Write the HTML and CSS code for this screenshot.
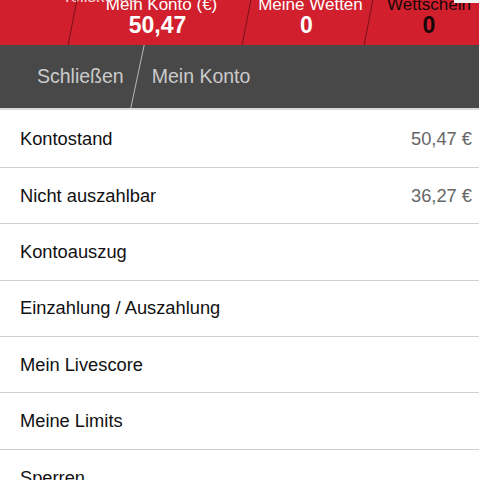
FILE: index.html
```html
<!DOCTYPE html>
<html>
<head>
<title>Mein Konto</title>
<link rel="stylesheet" href="styles.css">
</head>
<body>

<div class="topbar">
  <span class="ghost">Teilskonto</span>
  <span class="corner"></span>
  <div class="tab tab-first"></div>
  <div class="slash"></div>
  <div class="tab tab-konto">
    <span class="tab-label">Mein Konto (€)</span>
    <span class="tab-value">50,47</span>
  </div>
  <div class="slash"></div>
  <div class="tab tab-wetten">
    <span class="tab-label">Meine Wetten</span>
    <span class="tab-value">0</span>
  </div>
  <div class="slash"></div>
  <div class="tab tab-schein">
    <span class="tab-label">Wettschein</span>
    <span class="tab-value">0</span>
  </div>
</div>

<div class="crumbs">
  <span class="crumb crumb-back">Schließen</span>
  <div class="crumb-slash"></div>
  <span class="crumb">Mein Konto</span>
</div>

<ul class="menu">
  <li class="row"><span>Kontostand</span><span class="amount">50,47 €</span></li>
  <li class="row"><span>Nicht auszahlbar</span><span class="amount">36,27 €</span></li>
  <li class="row"><span>Kontoauszug</span></li>
  <li class="row"><span>Einzahlung / Auszahlung</span></li>
  <li class="row"><span>Mein Livescore</span></li>
  <li class="row"><span>Meine Limits</span></li>
  <li class="row"><span>Sperren</span></li>
</ul>

</body>
</html>
```

FILE: styles.css
```css
body
{
	margin: 0;
	font-family: "Liberation Sans", Arial, Helvetica, sans-serif;
	background: #ffffff;
	overflow: hidden;
}

/* red account strip */
.topbar
{
	position: relative;
	display: flex;
	height: 45px;
	background: #d11f2d;
	overflow: hidden;
	color: #ffffff;
}
.ghost
{
	position: absolute;
	left: 62px;
	top: -13px;
	font-size: 17px;
	color: #f4d4d6;
}
.corner
{
	position: absolute;
	right: 0;
	top: 0;
	width: 25px;
	height: 3px;
	background: #f2f2f2;
}
.tab
{
	display: flex;
	flex-direction: column;
	align-items: center;
	flex: none;
}
.tab-first { width: 72px; }
.tab-konto { width: 173px; padding-left: 4px; box-sizing: border-box; }
.tab-wetten { width: 121px; padding-left: 6px; box-sizing: border-box; }
.tab-schein { width: 130px; padding-right: 10px; box-sizing: border-box; color: #140808; }
.tab-label
{
	font-size: 17px;
	line-height: 18px;
	margin-top: -4px;
	white-space: nowrap;
}
.tab-value
{
	font-size: 23px;
	font-weight: bold;
	line-height: 24px;
	margin-top: -1px;
}
.tab-konto .tab-value { margin-left: -8px; }
.tab-wetten .tab-value { margin-left: -8px; }
.slash
{
	flex: none;
	width: 1px;
	height: 45px;
	background: #7a1219;
	transform: skewX(-11deg);
}

/* breadcrumb bar */
.crumbs
{
	display: flex;
	align-items: center;
	height: 63px;
	background: #484848;
	border-bottom: 2px solid #dadada;
	color: #cbcbcb;
	font-size: 19.5px;
}
.crumb-back { padding-left: 37px; padding-right: 13px; }
.crumb-slash
{
	width: 1px;
	height: 63px;
	background: #b8b8b8;
	transform: skewX(-12deg);
	margin-right: 14px;
}

/* account menu */
.menu
{
	list-style: none;
	margin: 0;
	padding: 1.5px 0 0 0;
}
.row
{
	display: flex;
	align-items: center;
	justify-content: space-between;
	box-sizing: border-box;
	height: 56.4px;
	padding: 0 7px 0 20px;
	border-bottom: 1px solid #cfcfcf;
	font-size: 18.3px;
	color: #111111;
}
.amount
{
	color: #666666;
}
```
